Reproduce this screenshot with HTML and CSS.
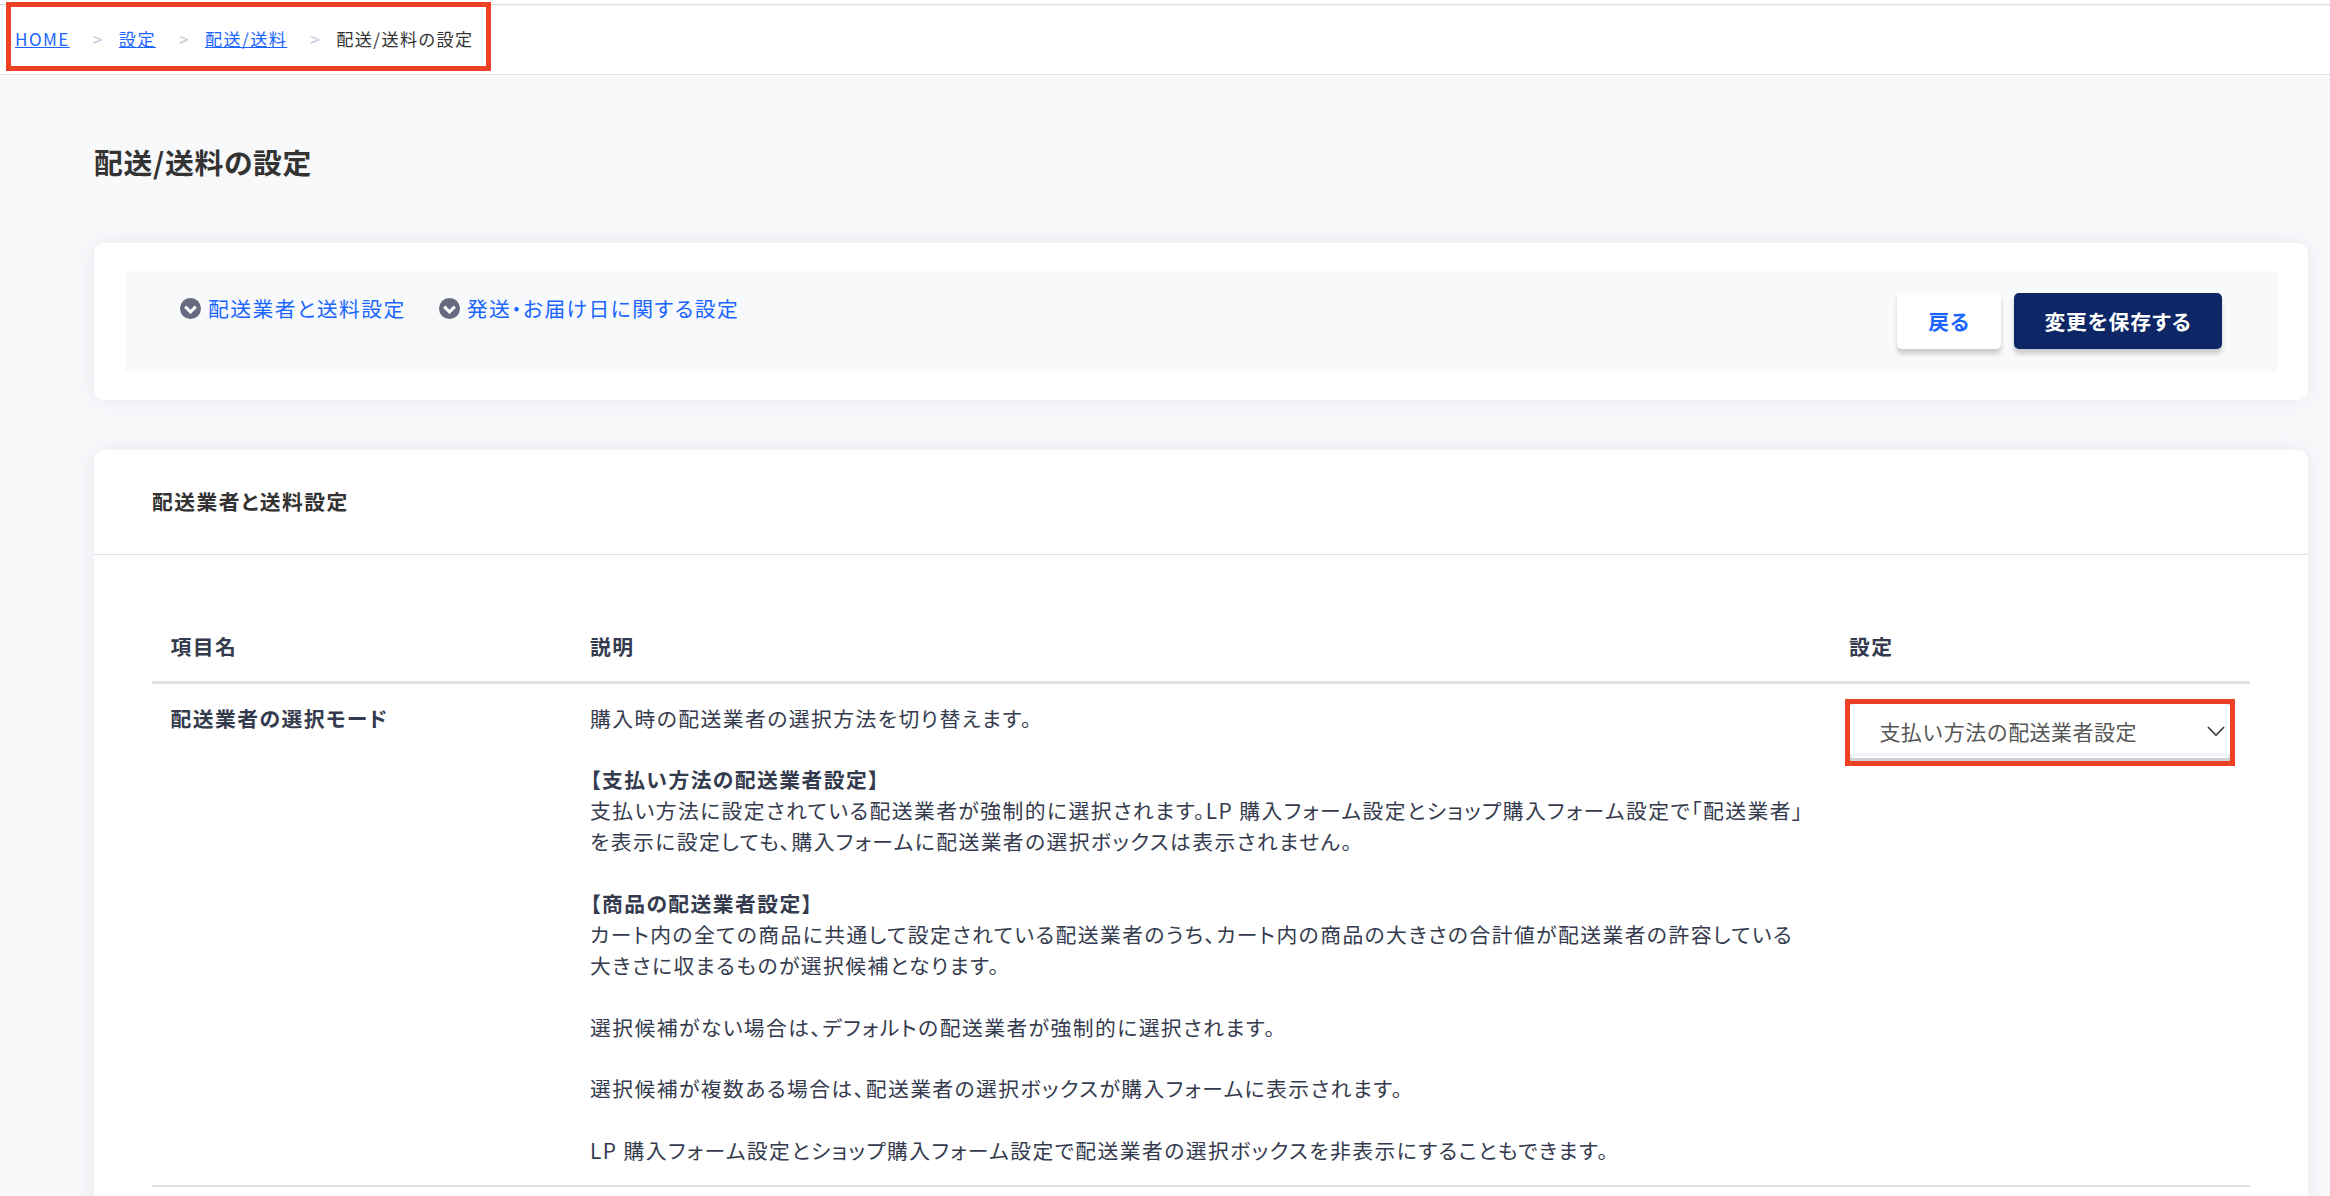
FILE: index.html
```html
<!DOCTYPE html>
<html lang="ja">
  <head>
    <meta charset="UTF-8" />
    <title>配送/送料の設定</title>
    <link rel="stylesheet" href="styles.css">
  </head>
  <body>
    <header class="header">
      <!-- パンくずリスト -->
      <ul class="breadcrumb">
        <li><a href="#">HOME</a></li>
        <li><a href="#">設定</a></li>
        <li><a href="#">配送/送料</a></li>
        <li>配送/送料の設定</li>
      </ul>
    </header>

    <main class="main">
      <h1 class="title">配送/送料の設定</h1>

      <section class="card nav_card">
        <div class="nav_box">
          <ul class="anchors">
            <li>
              <svg class="icon" viewBox="0 0 21 21">
                <circle cx="10.5" cy="10.5" r="10.5" fill="#666a80" />
                <path d="M5.2 8.6l5.3 5.2 5.3-5.2" fill="none" stroke="#fff" stroke-width="3" />
              </svg>
              <a href="#carrier">配送業者と送料設定</a>
            </li>
            <li>
              <svg class="icon" viewBox="0 0 21 21">
                <circle cx="10.5" cy="10.5" r="10.5" fill="#666a80" />
                <path d="M5.2 8.6l5.3 5.2 5.3-5.2" fill="none" stroke="#fff" stroke-width="3" />
              </svg>
              <a href="#date">発送・お届け日に関する設定</a>
            </li>
          </ul>
          <div class="buttons">
            <button class="btn btn_back" type="button">戻る</button>
            <button class="btn btn_save" type="button">変更を保存する</button>
          </div>
        </div>
      </section>

      <section class="card" id="carrier">
        <h2 class="card_title">配送業者と送料設定</h2>
        <div class="card_body">
          <table class="table">
            <thead>
              <tr>
                <th class="col_name">項目名</th>
                <th class="col_desc">説明</th>
                <th class="col_set">設定</th>
              </tr>
            </thead>
            <tbody>
              <tr>
                <th>配送業者の選択モード</th>
                <td>
                  購入時の配送業者の選択方法を切り替えます。<br><br>
                  <b>【支払い方法の配送業者設定】</b><br>
                  支払い方法に設定されている配送業者が強制的に選択されます。LP 購入フォーム設定とショップ購入フォーム設定で「配送業者」<br>
                  を表示に設定しても、購入フォームに配送業者の選択ボックスは表示されません。<br><br>
                  <b>【商品の配送業者設定】</b><br>
                  カート内の全ての商品に共通して設定されている配送業者のうち、カート内の商品の大きさの合計値が配送業者の許容している<br>
                  大きさに収まるものが選択候補となります。<br><br>
                  選択候補がない場合は、デフォルトの配送業者が強制的に選択されます。<br><br>
                  選択候補が複数ある場合は、配送業者の選択ボックスが購入フォームに表示されます。<br><br>
                  LP 購入フォーム設定とショップ購入フォーム設定で配送業者の選択ボックスを非表示にすることもできます。
                </td>
                <td class="cell_select">
                  <div class="select_box">
                    <select class="select">
                      <option>支払い方法の配送業者設定</option>
                    </select>
                    <svg class="arrow" viewBox="0 0 18 11">
                      <path d="M1 1l8 8.3L17 1" fill="none" stroke="#444" stroke-width="1.8" />
                    </svg>
                  </div>
                </td>
              </tr>
            </tbody>
          </table>
        </div>
      </section>
    </main>
  </body>
</html>
```
FILE: styles.css
```css
* {
  box-sizing: border-box;
  margin: 0;
  padding: 0;
  list-style: none;
}
body {
  height: 1196px;
  overflow: hidden;
  font-family: "Noto Sans CJK JP", sans-serif;
  font-size: 20.8px;
  line-height: 30.9px;
  letter-spacing: 0.0695em;
  font-feature-settings: "palt";
  color: #353b4e;
  background-color: #f8f9fb;
}
a {
  color: #1a66ff;
}
.header {
  height: 75px;
  padding: 2px 6px 0;
  border-bottom: 1px solid #dee0e4;
  background: linear-gradient(#fff 4px, #dcdcdc 4px, #dcdcdc 5px, #f7f7f7 5px, #fff 8px);
}
.breadcrumb {
  display: flex;
  align-items: center;
  width: 485px;
  height: 69px;
  padding: 5px 0 0 4px;
  border: 5px solid #ee4025;
  background-color: #fff;
  font-size: 17.1px;
  white-space: nowrap;
  color: #333;
}
.breadcrumb li + li::before {
  content: ">";
  display: inline-block;
  box-sizing: border-box;
  width: 49px;
  padding-left: 23px;
  color: #c3c5d6;
}
.main {
  padding: 66px 22px 0 94px;
}
.title {
  height: 43px;
  font-size: 28.8px;
  line-height: 42px;
  letter-spacing: 0.025em;
  color: #333;
}
.card {
  border-radius: 10px;
  background-color: #fff;
  box-shadow: 0 0 24px rgba(70, 90, 110, 0.1);
}
.nav_card {
  height: 157px;
  margin: 59px 0 50px;
  padding: 28px 31px;
}
.nav_box {
  display: flex;
  justify-content: space-between;
  height: 100px;
  padding: 22px 55px 0;
  background-color: #f8f9fb;
}
.anchors {
  display: flex;
  gap: 33px;
}
.anchors li {
  display: flex;
  height: 31px;
  gap: 7px;
}
.anchors a {
  text-decoration: none;
}
.icon {
  width: 21px;
  height: 21px;
  margin-top: 5px;
}
.buttons {
  display: flex;
  gap: 13px;
}
.btn {
  height: 56px;
  border: 0;
  border-radius: 5px;
  box-shadow: 0 5px 4px rgba(0, 0, 0, 0.18);
  font: bold 20.8px "Noto Sans CJK JP", sans-serif;
  letter-spacing: 0.042em;
  font-feature-settings: "palt";
}
.btn_back {
  width: 104px;
  background-color: #fff;
  color: #1a66ff;
}
.btn_save {
  width: 208px;
  background-color: #0c2666;
  color: #fff;
}
.card_title {
  height: 105px;
  padding: 36px 58px 0;
  border-bottom: 1px solid #dcdfe3;
  font-size: 20.8px;
  color: #333;
}
.card_body {
  height: 700px;
  padding: 59px 58px 0;
}
.table {
  width: 100%;
  table-layout: fixed;
  border-collapse: separate;
  border-spacing: 0;
}
.table th,
.table td {
  padding: 18.6px 18.5px;
  text-align: left;
  vertical-align: top;
  white-space: nowrap;
}
.table thead th {
  height: 70px;
  padding-top: 17px;
  border-bottom: 3px solid #dee2e6;
}
.table tbody th,
.table tbody td {
  height: 502px;
  border-bottom: 2px solid #dee2e6;
}
.col_name,
.col_set {
  width: 20%;
}
.col_desc {
  width: 60%;
}
.table .cell_select {
  padding: 15px 14px;
}
.select_box {
  position: relative;
  width: 390px;
  height: 67px;
  margin-left: 1px;
  border: 5px solid #ee4025;
  background-color: #cfd2db;
}
.select {
  width: 100%;
  height: 54px;
  display: block;
  padding-left: 29px;
  appearance: none;
  border: 0;
  border-radius: 4px;
  background: linear-gradient(#fff 47px, #eeeef1 52px, #fff 52px);
  font: 21px "Noto Sans CJK JP", sans-serif;
  letter-spacing: 0.022em;
  color: #555;
}
.arrow {
  position: absolute;
  top: 22px;
  right: 5px;
  width: 18px;
  height: 11px;
}
```
